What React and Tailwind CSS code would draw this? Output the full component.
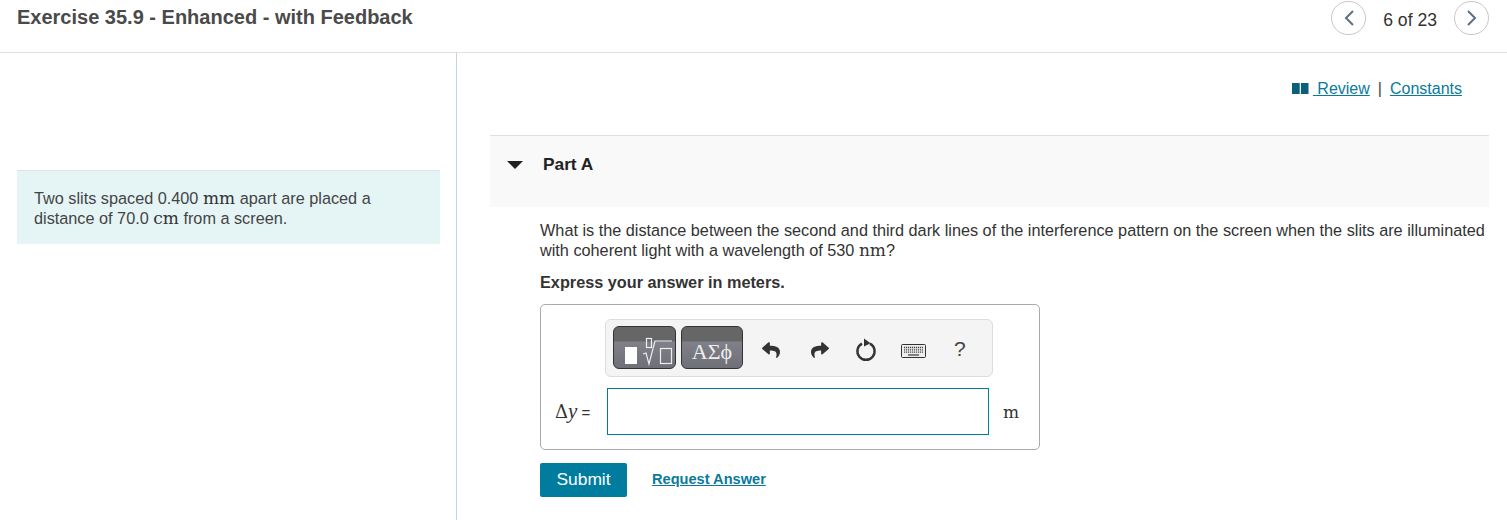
import React from 'react';
import { FaReply, FaShare } from 'react-icons/fa';

const Chevron = ({ dir }) => (
  <svg width="12" height="18" viewBox="0 0 12 18" fill="none" stroke="#5f6f80" strokeWidth="2">
    <path d={dir === 'left' ? 'M10 2 L3 9 L10 16' : 'M2 2 L9 9 L2 16'} />
  </svg>
);

const NavButton = ({ dir }) => (
  <button className="w-[35px] h-[34px] rounded-full border border-[#c8c8c8] bg-white flex items-center justify-center">
    <Chevron dir={dir} />
  </button>
);

const Unit = ({ children }) => (
  <span className="font-['DejaVu_Serif',serif] text-[17px] leading-none text-[#333]">{children}</span>
);

const templateBtn = 'h-[43px] -mt-[1px] rounded-[6px] border border-[#333] bg-[linear-gradient(#666_0,#666_14px,#80808a_15px,#6f6f76_100%)] flex items-center justify-center';

const RedoCircle = () => (
  <svg width="22" height="24" viewBox="0 0 22 24" fill="none">
    <path d="M7 5.6 A8.6 8.6 0 1 0 15 5.6" stroke="#333" strokeWidth="2.4" />
    <path d="M9 0.5 L15.5 5.2 L9 8.5 Z" fill="#333" />
  </svg>
);

const KeyboardIcon = () => (
  <svg width="25" height="14" viewBox="0 0 25 14" fill="none">
    <rect x="0.5" y="0.5" width="24" height="13" rx="1" fill="#eee" stroke="#333" />
    <path d="M3 3.5H22M3 5.8H22M3 8.1H22" stroke="#444" strokeWidth="1.3" strokeDasharray="1.2 0.8" />
    <path d="M7 11H18" stroke="#444" strokeWidth="1.3" />
  </svg>
);

const App = () => {
  return (
    <div className="w-[1507px] h-[520px] overflow-hidden bg-white font-['Liberation_Sans',Arial,sans-serif] text-[16.25px] leading-[20px] text-[#333]">
      <header className="h-[53px] border-b border-[#e0e0e0] flex items-start justify-between pl-[17px] pr-[18px]">
        <h1 className="mt-[7px] text-[20px] leading-[20px] font-bold text-[#4a4a4a]">Exercise 35.9 - Enhanced - with Feedback</h1>
        <div className="mt-[1px] flex items-start">
          <NavButton dir="left" />
          <span className="mx-[17px] mt-[9px] text-[17.6px] text-[#333]">6 of 23</span>
          <NavButton dir="right" />
        </div>
      </header>

      <div className="flex h-[467px]">
        <aside className="w-[457px] shrink-0 pl-[17px] pr-[16px] border-r border-[#c5d3e0] pt-[117px]">
          <div className="h-[74px] bg-[#e5f5f6] border-t border-[#dde3e8] pl-[17px] pr-[20px] pt-[17px] text-[#444]">
            Two slits spaced 0.400 <Unit>mm</Unit> apart are placed a distance of 70.0 <Unit>cm</Unit> from a screen.
          </div>
        </aside>

        <main className="flex-1 min-w-0 pl-[33px] pr-[18px]">
          <div className="h-[82px] pt-[26px] pr-[27px] flex justify-end items-start text-[16px] text-[#0a7a9b]">
            <svg width="17" height="11" viewBox="0 0 17 11" className="mt-[4px] mr-[4px]">
              <path d="M0 0H7.7V11H0Z M8.9 0H16.5V11H8.9Z" fill="#0b5f78" />
            </svg>
            <a href="#" className="underline whitespace-pre"> Review</a>
            <span className="mx-[8px] text-[#444]">|</span>
            <a href="#" className="underline">Constants</a>
          </div>

          <section className="h-[72px] bg-[#f9f9f9] border-t border-[#e0e0e0] flex items-start pt-[18px] pl-[17px]">
            <span className="mt-[7px] w-0 h-0 border-x-[8px] border-x-transparent border-t-[8px] border-t-[#222]" />
            <h2 className="ml-[20px] text-[17.3px] font-bold text-[#222]">Part A</h2>
          </section>

          <div className="pl-[50px] pt-[13px]">
            <p className="w-[960px]">
              What is the distance between the second and third dark lines of the interference pattern on the screen when the slits are illuminated with coherent light with a wavelength of 530 <Unit>nm</Unit>?
            </p>
            <p className="mt-[12px] font-bold">Express your answer in meters.</p>

            <div className="mt-[12px] w-[500px] h-[146px] border border-[#aaa] rounded-[5px] pt-[14px]">
              <div className="ml-[64px] w-[388px] h-[58px] rounded-[6px] border border-[#ddd] bg-[#f4f4f4] flex items-center pl-[7px]">
                <button className={`${templateBtn} w-[63px]`}>
                  <svg width="61" height="41" viewBox="1 1 61 41" fill="none" stroke="#eee" strokeWidth="1.2">
                    <rect x="12" y="21" width="12" height="17" fill="#fff" stroke="none" />
                    <rect x="33.5" y="12.5" width="5" height="9" />
                    <path d="M30 28L33 27L36 38L42 15H59" />
                    <rect x="47.5" y="22.5" width="11" height="15" />
                  </svg>
                </button>
                <button className={`${templateBtn} ml-[5px] w-[62px] pt-[8px] font-['Liberation_Serif',serif] text-[22px] text-[#eee]`}>ΑΣϕ</button>
                <span className="ml-[19px] mt-[4px] w-[18px] flex justify-center"><FaReply size={18} color="#333" /></span>
                <span className="ml-[31px] mt-[4px] w-[18px] flex justify-center"><FaShare size={18} color="#333" /></span>
                <span className="ml-[26px] mt-[3px] w-[22px] flex justify-center"><RedoCircle /></span>
                <span className="ml-[24px] mt-[6px] w-[25px] flex justify-center"><KeyboardIcon /></span>
                <span className="ml-[28px] mt-[1px] text-[21px] text-[#444]">?</span>
              </div>

              <div className="mt-[11px] flex items-center pl-[14px]">
                <span className="w-[52px] whitespace-nowrap">
                  <span className="font-['DejaVu_Serif',serif] text-[18px]">Δ</span>
                  <i className="font-['Liberation_Serif',serif] text-[21px]">y</i>
                  <span className="text-[15px]"> =</span>
                </span>
                <input className="w-[382px] h-[47px] border border-[#007c9e] outline-none bg-white" />
                <span className="ml-[14px]"><Unit>m</Unit></span>
              </div>
            </div>

            <div className="mt-[13px] flex items-center">
              <button className="w-[87px] h-[34px] pb-[2px] rounded-[2px] bg-[#007c9e] text-[17.4px] text-white">Submit</button>
              <a href="#" className="ml-[25px] -mt-[3px] text-[14.6px] font-bold underline text-[#0a7a9b]">Request Answer</a>
            </div>
          </div>
        </main>
      </div>
    </div>
  );
};

export default App;
